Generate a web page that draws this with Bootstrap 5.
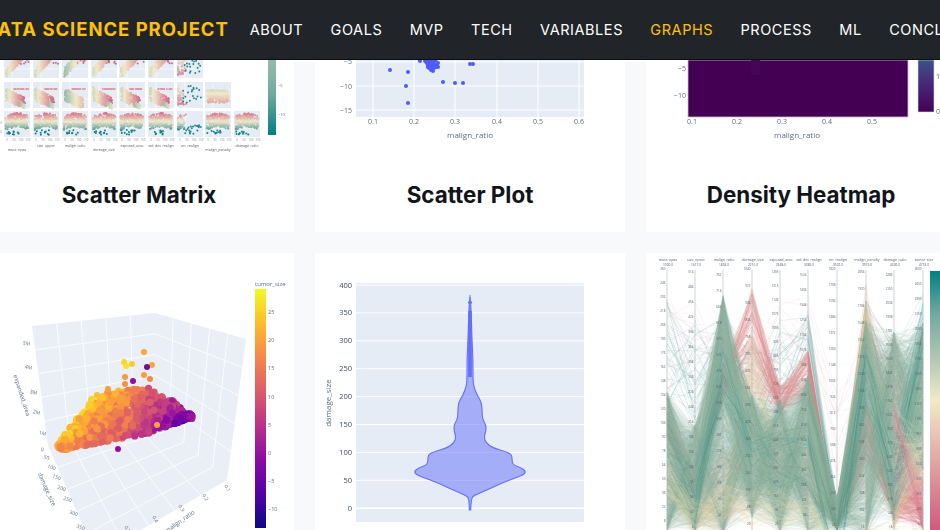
<!DOCTYPE html>
<html lang="en">

<head>
    <meta charset="UTF-8">
    <meta name="viewport" content="width=device-width, initial-scale=1.0">
    <title>Data Science Project</title>
    <link href="https://cdn.jsdelivr.net/npm/bootstrap@5.3.0/dist/css/bootstrap.min.css" rel="stylesheet">
    <style>
        html,
        body {
            height: 530px;
            overflow: hidden;
            background-color: #f8f9fa;
        }

        .page-shift {
            width: 1000px;
            margin-left: -16px;
        }

        .top-bar {
            height: 60px;
            padding: 0;
            background-color: #212529;
            border-bottom: 1px solid #0c0e10;
            font-family: "Inter", "Liberation Sans", sans-serif;
        }

        .top-bar .navbar-brand {
            margin: 0 7.3px 0 0;
            padding: 0;
            font-size: 18.5px;
            font-weight: 700;
            letter-spacing: .95px;
            color: #ffc107;
        }

        .top-bar .navbar-nav .nav-link {
            padding: 0 13.7px;
            font-size: 14.5px;
            letter-spacing: .55px;
            color: #fff;
        }

        .top-bar .navbar-nav .nav-link.active {
            color: #ffc107;
        }

        .gallery {
            display: grid;
            grid-template-columns: repeat(3, 310px);
            grid-template-rows: 172px 277px;
            gap: 21px;
            background: linear-gradient(#fff 2px, #f8f9fa 2px);
        }

        .plot-card {
            overflow: hidden;
        }

        .plot-svg {
            display: block;
            font-family: "Open Sans", "Liberation Sans", sans-serif;
            filter: blur(.35px);
        }

        .plot-name {
            margin: 0;
            padding: 16px 0 23px;
            font-family: "Inter", "Liberation Sans", sans-serif;
            font-size: 22.4px;
            line-height: 28px;
            font-weight: 700;
            color: #111418;
        }
    </style>
</head>

<body>
    <div class="page-shift">
        <nav class="navbar navbar-expand top-bar flex-nowrap justify-content-start">
            <a class="navbar-brand" href="#">DATA SCIENCE PROJECT</a>
            <ul class="navbar-nav flex-nowrap text-nowrap">
                <li class="nav-item"><a class="nav-link" href="#">ABOUT</a></li>
                <li class="nav-item"><a class="nav-link" href="#">GOALS</a></li>
                <li class="nav-item"><a class="nav-link" href="#">MVP</a></li>
                <li class="nav-item"><a class="nav-link" href="#">TECH</a></li>
                <li class="nav-item"><a class="nav-link" href="#">VARIABLES</a></li>
                <li class="nav-item"><a class="nav-link active" href="#">GRAPHS</a></li>
                <li class="nav-item"><a class="nav-link" href="#">PROCESS</a></li>
                <li class="nav-item"><a class="nav-link" href="#">ML</a></li>
                <li class="nav-item"><a class="nav-link" href="#">CONCLUSION</a></li>
            </ul>
        </nav>

        <div class="gallery">
            <div class="card border-0 rounded-0 plot-card">
                <svg id="matrixPlot" class="plot-svg" width="310" height="105" viewBox="-16 60 310 105"></svg>
                <h3 class="plot-name text-center">Scatter Matrix</h3>
            </div>
            <div class="card border-0 rounded-0 plot-card">
                <svg id="scatterPlot" class="plot-svg" width="310" height="105" viewBox="315 60 310 105"></svg>
                <h3 class="plot-name text-center">Scatter Plot</h3>
            </div>
            <div class="card border-0 rounded-0 plot-card">
                <svg id="heatPlot" class="plot-svg" width="310" height="105" viewBox="646 60 310 105"></svg>
                <h3 class="plot-name text-center">Density Heatmap</h3>
            </div>
            <div class="card border-0 rounded-0 plot-card">
                <svg id="cubePlot" class="plot-svg" width="310" height="277" viewBox="-16 253 310 277"></svg>
            </div>
            <div class="card border-0 rounded-0 plot-card">
                <svg id="violinPlot" class="plot-svg" width="310" height="277" viewBox="315 253 310 277"></svg>
            </div>
            <div class="card border-0 rounded-0 plot-card">
                <svg id="linesPlot" class="plot-svg" width="310" height="277" viewBox="646 253 310 277"></svg>
            </div>
        </div>
    </div>

    <script>
        // seeded so each render gives the same dots
        let seed = 12345;
        function rnd() {
            seed = (seed * 1664525 + 1013904223) % 4294967296;
            return seed / 4294967296;
        }

        function rampColor(stops, t) {
            t = Math.min(1, Math.max(0, t));
            const p = t * (stops.length - 1);
            const i = Math.min(stops.length - 2, Math.floor(p));
            const f = p - i;
            const c = [0, 1, 2].map(k => Math.round(stops[i][k] + (stops[i + 1][k] - stops[i][k]) * f));
            return "rgb(" + c.join(",") + ")";
        }

        const tealrose = [[0, 128, 128], [114, 170, 161], [177, 199, 179], [241, 234, 200], [229, 185, 173], [217, 137, 148], [208, 88, 126]];
        const plasma = [[13, 8, 135], [84, 2, 163], [139, 10, 165], [185, 50, 137], [219, 92, 104], [244, 136, 73], [254, 188, 43], [240, 249, 33]];

        function label(x, y, text, size, fill, anchor, rotate) {
            const turn = rotate ? ' transform="rotate(' + rotate + ' ' + x + ' ' + y + ')"' : "";
            return '<text x="' + x + '" y="' + y + '" font-size="' + size + '" fill="' + fill + '" text-anchor="' + (anchor || "middle") + '"' + turn + ">" + text + "</text>";
        }

        function gradient(id, stops) {
            let s = '<linearGradient id="' + id + '" x1="0" y1="1" x2="0" y2="0">';
            stops.forEach((c, i) => {
                s += '<stop offset="' + i / (stops.length - 1) + '" stop-color="rgb(' + c.join(",") + ')"/>';
            });
            return s + "</linearGradient>";
        }

        // scatter matrix
        function drawMatrix() {
            const cols = [4, 33, 62, 91, 119, 148, 177, 205, 234];
            const rows = [[52, 78], [82, 108], [111, 137]];
            const rowLen = [7, 8, 9];
            let s = "<defs>" + gradient("tealBar", [[0, 128, 128], [114, 170, 161], [160, 190, 170]]) + "</defs>";
            rows.forEach((r, ri) => {
                for (let ci = 0; ci < rowLen[ri]; ci++) {
                    const x0 = cols[ci];
                    const y0 = r[0];
                    s += '<rect x="' + x0 + '" y="' + y0 + '" width="26" height="26" fill="#e5ecf6"/>';
                    s += '<path d="M' + x0 + " " + (y0 + 17) + "h26M" + (x0 + 8) + " " + y0 + "v26" + '" stroke="#fff" stroke-width=".6"/>';
                    const count = ci === 6 ? 70 : 260;
                    for (let n = 0; n < count; n++) {
                        const u = rnd();
                        const v = rnd();
                        let px, py, c;
                        if (ci === 6) {
                            if (n < 50) {
                                px = 1 + u * u * 8;
                                py = ri === 2 ? 3 + v * 16 : 4 + v * 19;
                                c = ri === 2 ? 1 - py / 20 : .5 + v * .35;
                            } else {
                                px = 6 + u * 18;
                                py = ri === 2 ? 14 + v * 9 : 4 + v * 19;
                                c = .05;
                            }
                        } else if (ri === 2) {
                            px = 1.5 + u * 22.5;
                            py = 5 + v * 14 - Math.sin(u * 3) * 3;
                            c = 1 - py / 21;
                            if (n % 24 === 0) {
                                py = 19 + v * 5;
                                px = 2 + u * 14;
                                c = .02;
                            }
                        } else if (ci === 7) {
                            px = 2 + u * 22;
                            py = 8 + v * 13;
                            c = .42 + v * .3;
                        } else if (ri === 1) {
                            px = 2 + u * 19;
                            py = 5 + u * 11 + v * (14 - u * 3);
                            c = ci === 2 ? .25 + u * .4 : .4 + u * .55 - (u > .7 && v > .5 ? .5 : 0);
                            if (n % 18 === 0) {
                                px = 10 + u * 14;
                                py = 7;
                                c = .78;
                            }
                        } else {
                            px = 2 + u * 20;
                            py = 26 - u * 22 - v * 10;
                            c = ci === 2 ? .28 + u * .4 : .42 + u * .45;
                            if (ci === 3 && u > .7 && v < .5) c = .1;
                            if (n % 20 === 0) {
                                px = 14 + v * 11;
                                py = 2 + u * 10;
                                c = .95;
                            }
                        }
                        s += '<circle cx="' + (x0 + px).toFixed(1) + '" cy="' + (y0 + py).toFixed(1) + '" r="1" fill="' + rampColor(tealrose, c) + '"/>';
                    }
                }
            });
            s += '<rect x="268" y="52" width="8" height="83" fill="url(#tealBar)"/>';
            s += label(278, 87, "−5", 4, "#667", "start") + label(278, 116, "−10", 4, "#667", "start");
            const names = [["mass_npea", 151], ["size_upper", 147], ["malign_ratio", 147], ["damage_size", 151], ["exposed_area", 147], ["std_dev_malign", 147], ["err_malign", 147], ["malign_penalty", 151], ["damage_ratio", 147]];
            names.forEach((n, i) => {
                s += label(cols[i] + 13, n[1], n[0], 3.6, "#556");
                for (let k = 0; k < 4; k++) s += label(cols[i] + 3 + k * 7, 141, k * 50, 2.8, "#889");
            });
            s += label(2, 124, "20", 3, "#889", "end") + label(2, 133, "0", 3, "#889", "end");
            document.getElementById("matrixPlot").innerHTML = s;
        }

        function drawScatter() {
            let s = '<rect x="356" y="60" width="228" height="57" fill="#e5ecf6"/>';
            s += '<path d="M373 60v57M414 60v57M455 60v57M497 60v57M538 60v57M579 60v57M356 62h228M356 86h228M356 110h228" stroke="#fff" stroke-width="1"/>';
            const dots = [[390, 70], [408, 72], [406, 86], [408, 103], [443, 82], [455, 83], [463, 83], [470, 64], [473, 64], [420, 61], [437, 65], [438, 67], [438, 63]];
            for (let i = 0; i < 30; i++) dots.push([425 + rnd() * 11, 60 + rnd() * 8]);
            dots.push([431, 70], [433, 71], [429, 68], [434, 68]);
            dots.forEach(d => {
                s += '<circle cx="' + d[0] + '" cy="' + d[1] + '" r="2" fill="#4f5bf8"/>';
            });
            ["0.1", "0.2", "0.3", "0.4", "0.5", "0.6"].forEach((t, i) => {
                s += label([373, 414, 455, 497, 538, 579][i], 124, t, 7, "#5a6b82");
            });
            s += label(352, 64, "−5", 7, "#5a6b82", "end") + label(352, 89, "−10", 7, "#5a6b82", "end") + label(352, 113, "−15", 7, "#5a6b82", "end");
            s += label(470, 138, "malign_ratio", 8, "#5a6b82");
            document.getElementById("scatterPlot").innerHTML = s;
        }

        function drawHeat() {
            let s = "<defs>" + gradient("heatBar", [[68, 1, 84], [72, 36, 117], [59, 82, 139]]) + "</defs>";
            s += '<rect x="688" y="60" width="220" height="57" fill="#440154" stroke="#cdb7d6" stroke-width=".8"/>';
            s += '<rect x="751" y="60" width="9" height="15" fill="#470558"/>';
            s += '<rect x="918" y="60" width="16" height="52" fill="url(#heatBar)" stroke="#d9d5e2" stroke-width=".6"/>';
            s += label(936, 79, "10", 7, "#5a6b82", "start") + label(936, 114, "0", 7, "#5a6b82", "start");
            s += label(686, 71, "−5", 7, "#5a6b82", "end") + label(686, 98, "−10", 7, "#5a6b82", "end");
            ["0.1", "0.2", "0.3", "0.4", "0.5"].forEach((t, i) => {
                s += label(692 + i * 45, 124, t, 7, "#5a6b82");
            });
            s += label(797, 138, "malign_ratio", 8, "#5a6b82");
            document.getElementById("heatPlot").innerHTML = s;
        }

        function lerp(a, b, t) {
            return [a[0] + (b[0] - a[0]) * t, a[1] + (b[1] - a[1]) * t];
        }

        function gridLines(p, q, r, w, n) {
            // lines across a four sided pane p-q-r-w, in both directions
            let d = "";
            for (let i = 1; i < n; i++) {
                const a = lerp(p, q, i / n);
                const b = lerp(w, r, i / n);
                const c = lerp(p, w, i / n);
                const e = lerp(q, r, i / n);
                d += "M" + a.join(" ") + "L" + b.join(" ") + "M" + c.join(" ") + "L" + e.join(" ");
            }
            return d;
        }

        // y on a piecewise line through [x, y] points
        function edgeY(line, x) {
            for (let i = 0; i < line.length - 1; i++) {
                if (x <= line[i + 1][0]) {
                    return line[i][1] + (line[i + 1][1] - line[i][1]) * (x - line[i][0]) / (line[i + 1][0] - line[i][0]);
                }
            }
            return line[line.length - 1][1];
        }

        function drawCube() {
            const A = [32, 326], B = [155, 313], C = [246, 339], D = [227, 480], F = [48, 445], G = [155, 417], H = [96, 556];
            let s = "<defs>" + gradient("plasmaBar", plasma) + "</defs>";
            [[A, B, G, F], [B, C, D, G], [F, G, D, H]].forEach(w => {
                s += '<polygon points="' + w.map(p => p.join(",")).join(" ") + '" fill="#e9eef7"/>';
                s += '<path d="' + gridLines(w[0], w[1], w[2], w[3], 5) + '" stroke="#fff" stroke-width=".8" fill="none"/>';
            });
            const upper = [[57, 443], [80, 413], [93, 398], [117, 387], [150, 383], [157, 390], [173, 400], [193, 415]];
            const lower = [[57, 447], [63, 450], [113, 440], [150, 433], [177, 423], [193, 416]];
            const cloud = [];
            for (let i = 0; i < 1000; i++) {
                const x = 58 + rnd() * 134;
                const top = edgeY(upper, x) + rnd() * 5;
                const bottom = edgeY(lower, x);
                const v = Math.pow(rnd(), .8);
                const y = top + (bottom - top) * v;
                // orange on the left, through pink, to deep purple on the right
                const k = (x - 58) / 134;
                let t = k < .5 ? .72 - k * .3 : .57 - (k - .5) * .9;
                t += (rnd() - .5) * .16 + (1 - v) * .2;
                cloud.push([x, y, t]);
            }
            cloud.forEach(p => {
                s += '<circle cx="' + p[0].toFixed(1) + '" cy="' + p[1].toFixed(1) + '" r="3.6" fill="' + rampColor(plasma, p[2]) + '"/>';
            });
            [[144, 352, .8], [124, 362, .92], [126, 366, .95], [132, 364, .9], [152, 365, .8], [147, 367, .24], [125, 377, .76], [125, 384, .74], [144, 375, .78], [150, 379, .72], [133, 381, .3], [118, 449, .3], [157, 425, .8], [172, 400, .35], [92, 399, .92], [97, 395, .86], [108, 389, .78]].forEach(p => {
                s += '<circle cx="' + p[0] + '" cy="' + p[1] + '" r="3" fill="' + rampColor(plasma, p[2]) + '"/>';
            });
            s += '<rect x="255" y="289" width="11" height="239" fill="url(#plasmaBar)"/>';
            s += label(255, 286, "tumor_size", 6, "#5a6b82", "start");
            ["25", "20", "15", "10", "5", "0", "−5", "−10"].forEach((t, i) => {
                s += label(268, 314 + i * 28.2, t, 5.5, "#5a6b82", "start");
            });
            [["5M", 26, 345], ["4M", 28, 369], ["3M", 33, 394], ["2M", 36, 414], ["1M", 42, 435], ["0", 42, 451]].forEach(t => {
                s += label(t[1], t[2], t[0], 5, "#5a6b82", "middle", 15);
            });
            [["50", 46, 459], ["100", 51, 469], ["150", 56, 479], ["200", 61, 490], ["250", 67, 501], ["300", 73, 515], ["350", 80, 529]].forEach(t => {
                s += label(t[1], t[2], t[0], 5, "#5a6b82", "middle", 20);
            });
            [["0.1", 226, 489], ["0.2", 204, 498], ["0.3", 180, 509], ["0.4", 154, 520], ["0.5", 126, 530]].forEach(t => {
                s += label(t[1], t[2], t[0], 5, "#5a6b82", "middle", 60);
            });
            s += label(20, 396, "expanded_area", 6, "#5a6b82", "middle", 72);
            s += label(45, 490, "damage_size", 6, "#5a6b82", "middle", 66);
            s += label(181, 523, "malign_ratio", 6, "#5a6b82", "middle", -35);
            document.getElementById("cubePlot").innerHTML = s;
        }

        function drawViolin() {
            let s = '<rect x="356" y="283" width="228" height="239" fill="#e5ecf6"/>';
            const ticks = ["400", "350", "300", "250", "200", "150", "100", "50", "0"];
            ticks.forEach((t, i) => {
                const y = 285 + i * 27.9;
                s += '<path d="M356 ' + y + 'h228" stroke="#fff" stroke-width="' + (t === "0" ? 1.6 : 1) + '"/>';
                s += label(352, y + 2.5, t, 7.5, "#3d4a5e", "end");
            });
            s += label(331, 403, "damage_size", 8, "#5a6b82", "middle", -90);
            // half widths read off the reference, [y, half width] in page pixels
            const shape = [[510, .7], [498, 1], [495, 5], [490, 17], [483, 32], [478, 45], [475, 53], [472, 56], [468, 52], [465, 43], [460, 42], [455, 42], [452, 37], [448, 23], [443, 16], [437, 14], [431, 16], [425, 16], [420, 13], [414, 12], [403, 12], [395, 7], [386, 3.5], [378, 3], [360, 3], [340, 2], [297, .7]];
            const right = shape.map(p => [470 + p[1], p[0]]);
            const left = shape.slice().reverse().map(p => [470 - p[1], p[0]]);
            const pts = right.concat(left);
            let d = "M" + pts[0].join(" ");
            for (let i = 1; i < pts.length - 1; i++) {
                const mid = [(pts[i][0] + pts[i + 1][0]) / 2, (pts[i][1] + pts[i + 1][1]) / 2];
                d += "Q" + pts[i].join(" ") + " " + mid.join(" ");
            }
            d += "L" + pts[pts.length - 1].join(" ") + "Z";
            s += '<path d="' + d + '" fill="#636efa" fill-opacity=".5" stroke="#636efa" stroke-width="1.1" stroke-linejoin="round"/>';
            s += '<path d="M470 295V377" stroke="#636efa" stroke-opacity=".6" stroke-width="1.6"/>';
            s += '<path d="M470 311V377" stroke="#636efa" stroke-width="3.6"/>';
            s += '<path d="M468 302.5h4" stroke="#636efa" stroke-width="2"/>';
            document.getElementById("violinPlot").innerHTML = s;
        }

        function drawLines() {
            const axes = [667, 695, 723, 752, 780, 808, 837, 866, 894, 923];
            const names = ["mass_npea", "size_npear", "malign_ratio", "damage_size", "exposed_area", "std_dev_malign", "err_malign", "malign_penalty", "damage_ratio", "tumor_size"];
            const spread = [[392, 532], [425, 532], [295, 535], [395, 517], [400, 532], [375, 532], [498, 530], [320, 535], [332, 520], [322, 470]];
            let s = "<defs>" + gradient("roseBar", tealrose.slice().reverse()) + "</defs>";

            function bundle(count, color, opacity, width, yAt) {
                let d = "";
                for (let n = 0; n < count; n++) {
                    axes.forEach((x, i) => {
                        d += (i === 0 ? "M" : "L") + x + " " + yAt(i).toFixed(1);
                    });
                }
                s += '<path d="' + d + '" fill="none" stroke="' + color + '" stroke-opacity="' + opacity + '" stroke-width="' + width + '"/>';
            }

            // thin loose lines at the top left
            bundle(46, "#5fa39a", .35, .4, i => {
                const tops = [300, 320, 305, 340, 320, 310, 500, 300, 340, 290];
                return tops[i] + rnd() * (i === 6 ? 30 : 110);
            });
            bundle(14, "#d9899a", .3, .3, i => [290, 300, 320, 310, 295, 295, 390, 320, 340, 500][i] + rnd() * 90);
            // orange and pink groups, under the green mass
            bundle(160, "#dba88f", .3, .45, i => {
                const peak = [395, 470, 450, 420, 430, 420, 525, 280, 335, 440][i];
                return peak + rnd() * [90, 60, 80, 90, 60, 80, 5, 220, 185, 90][i];
            });
            bundle(170, "#d98a8a", .3, .45, i => {
                const peak = [410, 470, 362, 288, 385, 350, 525, 400, 490, 480][i];
                return peak + rnd() * [30, 30, 40, 110, 30, 50, 5, 60, 30, 50][i];
            });
            bundle(80, "#e2d3a4", .3, .45, i => {
                const peak = [470, 500, 495, 330, 430, 440, 520, 300, 510, 380][i];
                return peak + rnd() * [50, 30, 40, 100, 60, 60, 10, 60, 20, 100][i];
            });
            // main green mass, with paler lines mixed through it
            const massY = i => spread[i][0] + (spread[i][1] - spread[i][0]) * rnd();
            bundle(1300, "#7fb0a0", .13, .55, massY);
            bundle(320, "#bccdb4", .14, .55, massY);
            bundle(260, "#7fb0a0", .13, .55, massY);
            // cream band near the bottom of the third axis
            bundle(60, "#e6d9ae", .3, .45, i => [460, 500, 480, 490, 490, 490, 525, 525, 525, 525][i] + rnd() * 40);
            bundle(24, "#008080", .22, .4, i => [420, 460, 340, 420, 430, 420, 525, 340, 440, 300][i] + rnd() * 70);

            // the right edge runs from cream to rose, following the colour bar
            let last = "";
            for (let n = 0; n < 220; n++) {
                const y = 430 + rnd() * 100;
                const col = rampColor(tealrose, .4 + (y - 430) / 100 * .6);
                last += '<path d="M894 ' + (400 + rnd() * 125).toFixed(1) + "L923 " + y.toFixed(1) + '" stroke="' + col + '" stroke-opacity=".3" stroke-width=".5"/>';
            }
            s += last;

            axes.forEach((x, i) => {
                s += '<path d="M' + x + ' 270V530" stroke="#9aa" stroke-opacity=".5" stroke-width="1"/>';
                s += label(x + 1, 261, names[i], 3.6, "#4f5d6e");
                s += label(x + 1, 265.5, (1000 + i * 417) + ".0", 3.2, "#4f5d6e");
                for (let y = 270 + (i % 3) * 3; y < 530; y += 14 + (i % 4)) {
                    s += label(x - 1.5, y, Math.round((530 - y) * (1 + i)), 3, "#4f5d6e", "end");
                }
            });
            s += '<rect x="930" y="271" width="12" height="260" fill="url(#roseBar)"/>';
            document.getElementById("linesPlot").innerHTML = s;
        }

        drawMatrix();
        drawScatter();
        drawHeat();
        drawCube();
        drawViolin();
        drawLines();
    </script>
    <script src="https://cdn.jsdelivr.net/npm/bootstrap@5.3.0/dist/js/bootstrap.bundle.min.js"></script>
</body>

</html>
